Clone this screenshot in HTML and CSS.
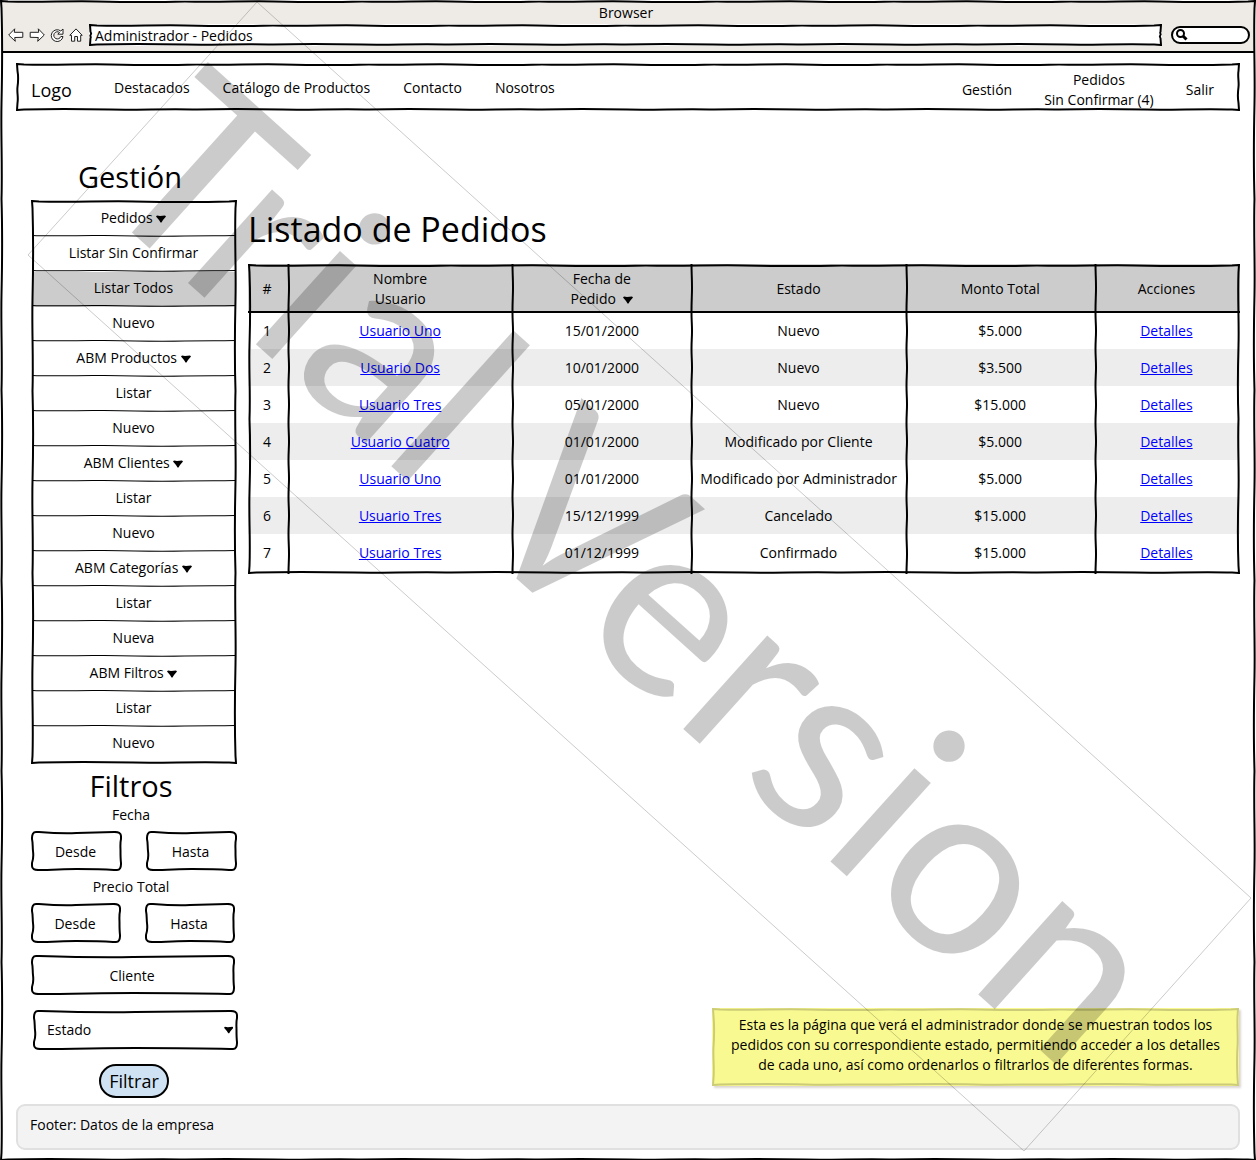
FILE: index.html
```html
<!DOCTYPE html>
<html lang="es">
<head>
<meta charset="utf-8">
<meta name="viewport" content="width=device-width, initial-scale=1">
<title>Administrador - Pedidos</title>
<link rel="stylesheet" href="styles.css">
</head>
<body>
<svg class="defs" width="0" height="0" aria-hidden="true">
  <symbol id="caret" viewBox="0 0 10 8"><path d="M0 1.500 1 .5 4 1 9 .5 10 1.500 7 5 5.500 7.500H4.500L3 5Z"/></symbol>
</svg>

<div class="window sketch">
  <header class="chrome">
    <div class="chrome-title">Browser</div>
    <div class="toolbar">
      <div class="tools">
        <button class="tool" aria-label="Atrás"><svg width="16" height="14" viewBox="0 0 16 14"><path d="M.7 7 6.700 .8 6.300 4.300 14.800 4.300 14.800 9.300 6.700 9.500 7.300 13.300Z"/></svg></button>
        <button class="tool" aria-label="Adelante"><svg width="16" height="14" viewBox="0 0 16 14"><path d="M15.300 7 9.300 .8 9.700 4.300 1.200 4.300 1.200 9.300 9.300 9.500 8.700 13.300Z"/></svg></button>
        <button class="tool" aria-label="Recargar"><svg width="14" height="14" viewBox="0 0 14 14"><path d="M10.800 3 13 1 13 6.200 7.800 6.200 9.500 4.400A3.600 3.600 0 1 0 10.800 8.500H13A5.900 5.900 0 1 1 10.800 3Z"/></svg></button>
        <button class="tool" aria-label="Inicio"><svg width="14" height="14" viewBox="0 0 14 14"><path d="M.8 7.300 7 .9 13.200 7.300H11.700V13.200H8.500V8.500H5.700V13.200H2.500V7.300Z"/></svg></button>
      </div>
      <div class="address sketch"><input class="address-input" type="text" value="Administrador - Pedidos" aria-label="Dirección"></div>
      <div class="search">
        <svg width="12" height="12" viewBox="0 0 12 12" aria-hidden="true"><circle cx="4.500" cy="4.500" r="3.500"/><path class="handle" d="M7 7 10.500 10.500"/></svg>
        <input class="search-input" type="search" aria-label="Buscar">
      </div>
    </div>
  </header>

  <div class="page">
    <nav class="topnav sketch" aria-label="Principal">
      <a class="logo" href="#">Logo</a>
      <div class="links sections">
        <a href="#">Destacados</a>
        <a href="#">Catálogo de Productos</a>
        <a href="#">Contacto</a>
        <a href="#">Nosotros</a>
      </div>
      <div class="links account">
        <a href="#">Gestión</a>
        <a href="#">Pedidos<br>Sin Confirmar (4)</a>
        <a href="#">Salir</a>
      </div>
    </nav>

    <div class="columns">
      <aside class="sidebar">
        <h2>Gestión</h2>
        <ul class="menu sketch">
          <li><a href="#">Pedidos <svg class="caret"><use href="#caret"/></svg></a></li>
          <li><a href="#">Listar Sin Confirmar</a></li>
          <li class="current"><a href="#" aria-current="page">Listar Todos</a></li>
          <li><a href="#">Nuevo</a></li>
          <li><a href="#">ABM Productos <svg class="caret"><use href="#caret"/></svg></a></li>
          <li><a href="#">Listar</a></li>
          <li><a href="#">Nuevo</a></li>
          <li><a href="#">ABM Clientes <svg class="caret"><use href="#caret"/></svg></a></li>
          <li><a href="#">Listar</a></li>
          <li><a href="#">Nuevo</a></li>
          <li><a href="#">ABM Categorías <svg class="caret"><use href="#caret"/></svg></a></li>
          <li><a href="#">Listar</a></li>
          <li><a href="#">Nueva</a></li>
          <li><a href="#">ABM Filtros <svg class="caret"><use href="#caret"/></svg></a></li>
          <li><a href="#">Listar</a></li>
          <li><a href="#">Nuevo</a></li>
        </ul>

        <form class="filters">
          <h2>Filtros</h2>
          <div role="group" aria-labelledby="fecha">
            <div class="group-label" id="fecha">Fecha</div>
            <div class="pair">
              <div class="field sketch"><input type="text" placeholder="Desde" aria-label="Fecha desde"></div>
              <div class="field sketch"><input type="text" placeholder="Hasta" aria-label="Fecha hasta"></div>
            </div>
          </div>
          <div role="group" aria-labelledby="precio">
            <div class="group-label" id="precio">Precio Total</div>
            <div class="pair price">
              <div class="field sketch"><input type="text" placeholder="Desde" aria-label="Precio desde"></div>
              <div class="field sketch"><input type="text" placeholder="Hasta" aria-label="Precio hasta"></div>
            </div>
          </div>
          <div class="field client sketch"><input type="text" placeholder="Cliente" aria-label="Cliente"></div>
          <div class="field state sketch">
            <select aria-label="Estado"><option>Estado</option><option>Nuevo</option><option>Cancelado</option><option>Confirmado</option></select>
            <svg class="caret"><use href="#caret"/></svg>
          </div>
          <button class="submit" type="button">Filtrar</button>
        </form>
      </aside>

      <main class="content">
        <h1>Listado de Pedidos</h1>
        <div class="orders sketch">
          <table>
            <colgroup><col class="c-num"><col class="c-user"><col class="c-date"><col class="c-state"><col class="c-total"><col class="c-actions"></colgroup>
            <thead>
              <tr><th>#</th><th>Nombre<br>Usuario</th><th>Fecha de<br>Pedido &nbsp;<svg class="caret"><use href="#caret"/></svg></th><th>Estado</th><th>Monto Total</th><th>Acciones</th></tr>
            </thead>
            <tbody>
              <tr><td>1</td><td><a href="#">Usuario Uno</a></td><td>15/01/2000</td><td>Nuevo</td><td>$5.000</td><td><a href="#">Detalles</a></td></tr>
              <tr><td>2</td><td><a href="#">Usuario Dos</a></td><td>10/01/2000</td><td>Nuevo</td><td>$3.500</td><td><a href="#">Detalles</a></td></tr>
              <tr><td>3</td><td><a href="#">Usuario Tres</a></td><td>05/01/2000</td><td>Nuevo</td><td>$15.000</td><td><a href="#">Detalles</a></td></tr>
              <tr><td>4</td><td><a href="#">Usuario Cuatro</a></td><td>01/01/2000</td><td>Modificado por Cliente</td><td>$5.000</td><td><a href="#">Detalles</a></td></tr>
              <tr><td>5</td><td><a href="#">Usuario Uno</a></td><td>01/01/2000</td><td>Modificado por Administrador</td><td>$5.000</td><td><a href="#">Detalles</a></td></tr>
              <tr><td>6</td><td><a href="#">Usuario Tres</a></td><td>15/12/1999</td><td>Cancelado</td><td>$15.000</td><td><a href="#">Detalles</a></td></tr>
              <tr><td>7</td><td><a href="#">Usuario Tres</a></td><td>01/12/1999</td><td>Confirmado</td><td>$15.000</td><td><a href="#">Detalles</a></td></tr>
            </tbody>
          </table>
        </div>
        <p class="note sketch">Esta es la página que verá el administrador donde se muestran todos los pedidos con su correspondiente estado, permitiendo acceder a los detalles de cada uno, así como ordenarlos o filtrarlos de diferentes formas.</p>
      </main>
    </div>

    <footer class="footer">Footer: Datos de la empresa</footer>
  </div>

  <svg class="watermark" viewBox="0 0 1256 1160">
    <path class="watermark-frame" d="M257 2 28 255 1024 1151 1251 898Z"/>
    <text transform="translate(257 2) rotate(42)" x="0" y="255">Trial Version</text>
  </svg>
</div>
</body>
</html>
```
FILE: styles.css
```css
* { box-sizing: border-box; }

body {
  margin: 0;
  background: #fff;
  color: #000;
  font: 14px/20px "Open Sans", "Noto Sans", sans-serif;
}

a { color: inherit; text-decoration: none; }
input, select, button { font: inherit; color: inherit; }
h1, h2 { margin: 0; font-weight: 400; }
.defs { position: absolute; }

/* Hand-drawn outline laid over a box; the wavy edges repeat along its sides */
.sketch {
  --outline: url("data:image/svg+xml,%3Csvg xmlns='http://www.w3.org/2000/svg' width='200' height='200'%3E%3Cpath fill='none' stroke='%23000' stroke-width='2' d='M1 1 8 1.500C40 2.500 70 .8 100 1.500S160 2.500 192 1.500L199 1 198.500 8C197.500 40 199.200 70 198.500 100S197.500 160 198.500 192L199 199 192 198.500C160 197.500 130 199.200 100 198.500S40 197.500 8 198.500L1 199 1.500 192C2.500 160 .8 130 1.500 100S2.500 40 1.500 8Z'/%3E%3C/svg%3E");
  position: relative;
}
.sketch::before {
  content: "";
  position: absolute;
  z-index: 1;
  inset: 0;
  border: 8px solid transparent;
  border-image: var(--outline) 8 round;
  pointer-events: none;
}

.caret { width: 10px; height: 8px; fill: #000; }

.window {
  display: flex;
  flex-direction: column;
  min-height: 100vh;
  padding: 2px;
  overflow: hidden;
}

/* Browser bar */
.chrome {
  padding: 0 4px 5px 6px;
  background: #eeebe6;
  border-bottom: 2px solid #000;
}
.chrome-title { height: 22px; padding-right: 6px; line-height: 22px; text-align: center; }
.toolbar { display: flex; align-items: center; }
.tools { display: flex; gap: 5px; align-items: center; width: 81px; }
.tool {
  display: flex;
  padding: 0;
  border: 0;
  background: none;
}
.tool svg { fill: #fff; stroke: #222; stroke-width: 1; }
.address { flex: 1; height: 22px; margin-right: 9px; background: #fff; }
.address-input {
  display: block;
  width: 100%;
  height: 22px;
  padding: 0 6px;
  border: 0;
  background: none;
}
.search {
  display: flex;
  align-items: center;
  width: 79px;
  height: 18px;
  padding: 0 3px;
  border: 2px solid #000;
  border-radius: 9px;
  background: #fff;
}
.search svg { flex: none; fill: none; stroke: #000; stroke-width: 2; }
.search .handle { stroke-width: 3; }
.search-input { width: 100%; min-width: 0; height: 14px; padding: 0; border: 0; background: none; outline: 0; }

.page {
  display: flex;
  flex: 1;
  flex-direction: column;
  padding: 10px 14px 9px;
}

.topnav {
  display: flex;
  align-items: center;
  min-height: 48px;
  padding: 7px 26px 1px 15px;
}
.logo { width: 83px; font-size: 18px; }
.links { display: flex; gap: 32px; align-items: center; text-align: center; }
.sections { gap: 33px; padding-bottom: 4px; }
.account { margin-left: auto; }

.columns {
  display: grid;
  flex: 1;
  grid-template-columns: 206px 1fr;
  gap: 11px;
  padding: 46px 0 6px 15px;
}

/* Sidebar */
.sidebar { text-align: center; }
.sidebar h2 { height: 43px; font-size: 29px; line-height: 40px; padding-right: 8px; }
.menu { margin: 0; padding: 2px; list-style: none; }
.menu li { position: relative; height: 35px; line-height: 31px; }
.menu li:not(:last-child)::after {
  content: "";
  position: absolute;
  inset: auto 0 0;
  height: 4px;
  background: url("data:image/svg+xml,%3Csvg xmlns='http://www.w3.org/2000/svg' width='200' height='4' viewBox='0 0 200 4' preserveAspectRatio='none'%3E%3Cpath fill='none' stroke='%23000' d='M0 2.500C20 3.500 45 2 70 2.500S120 3.500 150 3 180 3 200 2.500'/%3E%3C/svg%3E") 0 0 / 100% 100%;
  pointer-events: none;
}
.menu a { display: block; padding-right: 1px; }
.menu .current { background: #ccc; }

.filters { display: flex; flex-direction: column; }
.sidebar .filters h2 { height: 41px; line-height: 44px; padding-right: 6px; }
.group-label { height: 26px; line-height: 20px; padding-right: 6px; }
.pair { display: grid; grid-template-columns: 1fr 1fr; gap: 24px; margin-bottom: 6px; }
.price { padding-right: 2px; }
.field {
  --outline: url("data:image/svg+xml,%3Csvg xmlns='http://www.w3.org/2000/svg' width='200' height='200'%3E%3Cpath fill='none' stroke='%23000' stroke-width='2' d='M5 1 8 1C40 2 70 2.500 100 2S160 1.200 192 1Q199 .8 199 5V8C198 40 198.500 70 198.500 100S198.500 160 199 192Q199.200 199 195 199H192C160 198 130 198 100 198S40 199 8 199Q1 199.200 1 195V192C2.500 160 2.500 130 2 100S2 40 1 8Q.8 1 5 1Z'/%3E%3C/svg%3E");
  height: 40px;
}
.field input, .field select {
  display: block;
  width: 100%;
  height: 100%;
  padding: 0 16px 0 14px;
  border: 0;
  background: none;
  text-align: center;
}
.field input::placeholder { color: #000; opacity: 1; }
.client { margin: 6px 2px 15px 0; }
.state { display: flex; align-items: center; margin: 0 -1px 0 2px; padding-right: 5px; }
.field select { appearance: none; text-align: left; }
.submit {
  align-self: center;
  width: 70px;
  height: 34px;
  margin-top: 14px;
  padding: 0;
  border: 2px solid #000;
  border-radius: 17px;
  background: #cfe2f3;
  font-size: 18px;
}

/* Orders */
.content { display: flex; flex-direction: column; padding-top: 46px; }
h1 { height: 61px; font-size: 34px; line-height: 52px; }
table { width: 100%; border-collapse: collapse; table-layout: fixed; text-align: center; }
.c-num { width: 42px; }
.c-user { width: 224px; }
.c-date { width: 179px; }
.c-state { width: 214px; }
.c-total { width: 189px; }
.c-actions { width: 143px; }
th, td { height: 37px; padding: 0 4px 0 0; white-space: nowrap; }
th { height: 48px; padding-top: 2px; font-weight: 400; background-color: #ccc; border-bottom: 2px solid #000; }
th:not(:last-child), td:not(:last-child) {
  background-image: url("data:image/svg+xml,%3Csvg xmlns='http://www.w3.org/2000/svg' width='4' height='40' viewBox='0 0 4 40' preserveAspectRatio='none'%3E%3Cpath fill='none' stroke='%23000' stroke-width='2' d='M2.500 0C2.500 8 3 12 3 20S2.500 30 2.500 40'/%3E%3C/svg%3E");
  background-position: 100% 0;
  background-repeat: no-repeat;
  background-size: 4px 100%;
}
tbody tr:nth-child(even) { background: #ededed; }
tbody tr:last-child td { height: 40px; padding-bottom: 2px; }
td a { color: #00f; text-decoration: underline; }

.note {
  --outline: url("data:image/svg+xml,%3Csvg xmlns='http://www.w3.org/2000/svg' width='200' height='200'%3E%3Cpath fill='none' stroke='%23cccc78' stroke-width='2' d='M1 1 8 1.500C40 2.500 70 .8 100 1.500S160 2.500 192 1.500L199 1 198.500 8C198 40 199.200 70 198.500 100S198 160 198.500 192L199 199 192 198.500C160 198 130 199.200 100 198.500S40 198 8 198.500L1 199 1.500 192C2.500 160 .8 130 1.500 100S2.500 40 1.500 8Z'/%3E%3C/svg%3E");
  align-self: flex-end;
  max-width: 527px;
  margin: auto 1px 12px 0;
  padding: 7px 12px 11px;
  background: #f9f991;
  box-shadow: 2px 2px 2px #ddd6d6;
  text-align: center;
}

.footer {
  height: 46px;
  padding: 0 12px;
  border: 2px solid #e0e0e0;
  border-radius: 9px;
  background: #f3f3f3;
  line-height: 37px;
}

/* Trial overlay */
.watermark {
  position: absolute;
  z-index: 2;
  top: 0;
  left: 0;
  width: 100%;
  opacity: .2;
  pointer-events: none;
}
.watermark text { font-family: Lato, "Open Sans", sans-serif; font-size: 248px; }
.watermark-frame { fill: none; stroke: #000; stroke-width: 1; }
```
